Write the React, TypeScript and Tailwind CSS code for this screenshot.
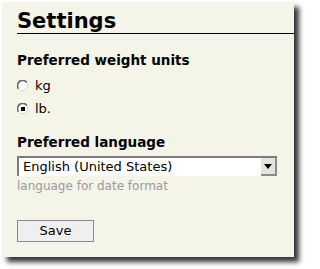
import React from 'react';

function Radio({ checked }: { checked?: boolean }) {
  return (
    <svg width="12" height="12" viewBox="0 0 12 12" className="shrink-0">
      <circle cx="6" cy="6" r="5.2" fill="#ffffff" />
      <path d="M9.8 2.4 A5.2 5.2 0 0 0 1.6 8.8" fill="none" stroke="#666666" strokeWidth="1.6" />
      <path d="M2.6 9.8 A5.2 5.2 0 0 0 10.4 3.4" fill="none" stroke="#d4d4cc" strokeWidth="1" />
      {checked && <rect x="4" y="4" width="4" height="4" fill="#000000" />}
    </svg>
  );
}

export default function App() {
  return (
    <div className="w-[306px] h-[269px] bg-white p-[2px] font-['DejaVu_Sans',sans-serif] text-black">
      <div className="w-[292px] h-[255px] bg-[#f4f4e8] shadow-[5px_5px_5px_rgba(0,0,0,0.8)] flex flex-col">
        <h1 className="ml-[15px] mt-[7px] text-[21px] leading-[24px] font-bold border-b border-black">
          Settings
        </h1>

        <div className="px-[15px] flex flex-col">
          <h2 className="mt-[18px] text-[13.5px] leading-[16px] font-bold">Preferred weight units</h2>
          <div className="mt-[6px] flex flex-col">
            <label className="h-[23px] flex items-center gap-[6px] text-[13px]">
              <Radio />
              <span>kg</span>
            </label>
            <label className="h-[23px] flex items-center gap-[6px] text-[13px]">
              <Radio checked />
              <span>lb.</span>
            </label>
          </div>

          <h2 className="mt-[14px] text-[13.5px] leading-[16px] font-bold">Preferred language</h2>
          <div className="mt-[6px] w-[260px] h-[20px] flex bg-white border-t-2 border-l-2 border-[#7c7c7c]">
            <div className="flex-1 pl-[4px] text-[13px] leading-[18px] whitespace-nowrap overflow-hidden">
              English (United States)
            </div>
            <div className="w-[16px] h-[18px] bg-[#e4e4dc] border-r-2 border-b-2 border-[#8a8a8a] flex items-center justify-center">
              <svg width="8" height="5" viewBox="0 0 8 5">
                <path d="M0 0 H8 L4 5 Z" fill="#000000" />
              </svg>
            </div>
          </div>
          <p className="mt-[3px] text-[12px] leading-[14px] text-[#9a9a9a]">language for date format</p>

          <button className="mt-[27px] w-[77px] h-[22px] bg-[#efefef] border border-[#8a8a8a] text-[13px] leading-[20px] text-center">
            Save
          </button>
        </div>
      </div>
    </div>
  );
}
